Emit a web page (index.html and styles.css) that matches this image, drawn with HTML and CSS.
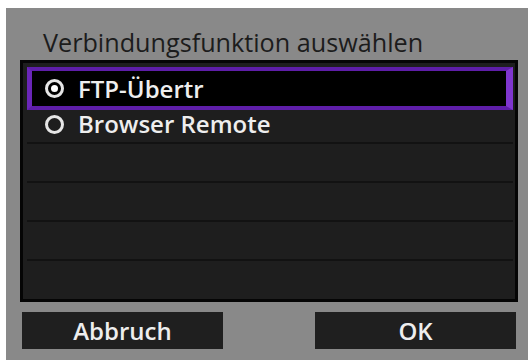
FILE: index.html
```html
<!DOCTYPE html>
<html lang="de">
<head>
<meta charset="utf-8">
<link rel="stylesheet" href="styles.css">
</head>
<body>
<div class="screen">
  <div class="title">Verbindungsfunktion auswählen</div>
  <div class="list">
    <div class="row selected">
      <span class="radio on"></span><span class="label">FTP-Übertr</span>
    </div>
    <div class="row second">
      <span class="radio"></span><span class="label">Browser Remote</span>
    </div>
    <div class="row empty"></div>
    <div class="row empty"></div>
    <div class="row empty"></div>
    <div class="row empty last"></div>
  </div>
  <div class="buttons">
    <div class="btn">Abbruch</div>
    <div class="btn">OK</div>
  </div>
</div>
</body>
</html>
```
FILE: styles.css
```css
html, body {
  margin: 0;
  padding: 0;
  background: #ffffff;
}
body {
  width: 532px;
  height: 360px;
  overflow: hidden;
  font-family: "Open Sans", "Noto Sans", sans-serif;
}
.screen {
  margin: 8px 4px 0 6px;
  height: 352px;
  background: #898989;
  padding: 0 10px 0 14px;
  box-sizing: border-box;
}
.title {
  height: 52px;
  box-sizing: border-box;
  padding: 19px 0 0 23px;
  font-size: 25.2px;
  line-height: 30px;
  color: #1c1c1c;
  white-space: nowrap;
}
.list {
  height: 242px;
  box-sizing: border-box;
  border: 3px solid #050505;
  background: #1e1e1e;
  padding: 4px 2px 0 4px;
  display: flex;
  flex-direction: column;
}
.row {
  display: flex;
  align-items: center;
  box-sizing: border-box;
  color: #eeeeee;
  font-size: 24px;
  font-weight: 600;
}
.row.selected {
  height: 43px;
  border-style: solid;
  border-width: 4px 7px 4px 5px;
  border-color: #5e1ea8 #7f36cf #5e1ea8 #6a26b8;
  background: #000;
  padding-left: 13px;
}
.row.second {
  height: 32px;
  padding-left: 18px;
  padding-bottom: 4px;
}
.row.empty {
  height: 39px;
  border-top: 2px solid #121212;
}
.radio {
  width: 19px;
  height: 19px;
  box-sizing: border-box;
  border: 3px solid #e6e6e6;
  border-radius: 50%;
  margin-right: 14px;
  display: flex;
  align-items: center;
  justify-content: center;
  flex: none;
}
.radio.on::after {
  content: "";
  width: 7px;
  height: 7px;
  border-radius: 50%;
  background: #ffffff;
}
.label {
  line-height: 26px;
}
.buttons {
  display: flex;
  justify-content: space-between;
  margin: 10px 2px 0 2px;
}
.btn {
  width: 201px;
  height: 37px;
  background: #1f1f1f;
  color: #eeeeee;
  font-size: 24px;
  font-weight: 600;
  display: flex;
  align-items: center;
  justify-content: center;
}
```
